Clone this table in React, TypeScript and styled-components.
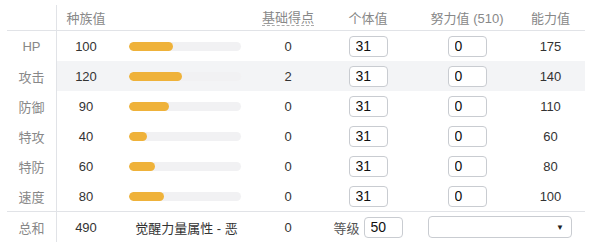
import styled, { createGlobalStyle } from "styled-components";

const GlobalStyle = createGlobalStyle`
  body {
    margin: 0;
    background: #fff;
    font-family: "Liberation Sans", "Noto Sans CJK SC", sans-serif;
    font-size: 13px;
    color: #333;
  }
`;

const COLS = "49px 1px 58px 143px 60px 100px 98px 69px";

const Table = styled.div`
  width: 578px;
  margin: 5px 0 0 7px;
  display: flex;
  flex-direction: column;
`;

const Row = styled.div<{ $h: number; $line?: boolean }>`
  display: grid;
  grid-template-columns: ${COLS};
  height: ${({ $h }) => $h}px;
  align-items: center;
  border-top: ${({ $line }) => ($line ? "1px solid #e1e3e7" : "none")};
`;

const Cell = styled.div<{ $shade?: boolean; $span?: number; $start?: boolean }>`
  height: 100%;
  display: flex;
  align-items: center;
  justify-content: ${({ $start }) => ($start ? "flex-start" : "center")};
  background: ${({ $shade }) => ($shade ? "#f3f4f6" : "transparent")};
  grid-column: ${({ $span }) => ($span ? `span ${$span}` : "auto")};
`;

const Label = styled(Cell)`
  color: #888;
`;

const VLine = styled.div`
  height: 100%;
  background: #e1e3e7;
`;

const Head = styled(Cell)`
  color: #888;
`;

const Dotted = styled.span`
  border-bottom: 1px dashed #aaa;
  line-height: 15px;
`;

const BarCell = styled(Cell)`
  justify-content: flex-start;
  padding-left: 14px;
`;

const Track = styled.div`
  width: 112px;
  height: 9px;
  border-radius: 5px;
  background: #f1f1f3;
  overflow: hidden;
`;

const Fill = styled.div`
  height: 100%;
  border-radius: 5px;
  background: #efb23a;
`;

const NumInput = styled.input`
  box-sizing: border-box;
  width: 39px;
  height: 21px;
  border: 1px solid #c9ccd1;
  border-radius: 4px;
  padding: 0 6px;
  font-family: "Liberation Sans", sans-serif;
  font-size: 14px;
  color: #111;
  background: #fff;
  outline: none;
`;

const LevelLabel = styled.span`
  color: #555;
  margin-right: 4px;
`;

const SelectBox = styled.div`
  box-sizing: border-box;
  width: 144px;
  height: 22px;
  margin-left: 10px;
  border: 1px solid #c9ccd1;
  border-radius: 4px;
  background: #fff;
  display: flex;
  align-items: center;
  justify-content: flex-end;
  padding-right: 7px;
  font-size: 8px;
  color: #222;
`;

const stats = [
  { name: "HP", base: 100, pt: 0, val: 175 },
  { name: "攻击", base: 120, pt: 2, val: 140 },
  { name: "防御", base: 90, pt: 0, val: 110 },
  { name: "特攻", base: 40, pt: 0, val: 60 },
  { name: "特防", base: 60, pt: 0, val: 80 },
  { name: "速度", base: 80, pt: 0, val: 100 },
];

export default function App() {
  return (
    <>
      <GlobalStyle />
      <Table>
        <Row $h={25}>
          <Head />
          <VLine />
          <Head>种族值</Head>
          <Head />
          <Head>
            <Dotted>基础得点</Dotted>
          </Head>
          <Head>个体值</Head>
          <Head>努力值 (510)</Head>
          <Head>能力值</Head>
        </Row>
        {stats.map((s, i) => {
          const shade = i === 1;
          return (
            <Row $h={30} $line={i === 0} key={s.name}>
              <Label>{s.name}</Label>
              <VLine />
              <Cell $shade={shade}>{s.base}</Cell>
              <BarCell $shade={shade}>
                <Track>
                  <Fill style={{ width: `${(s.base / 255) * 100}%` }} />
                </Track>
              </BarCell>
              <Cell $shade={shade}>{s.pt}</Cell>
              <Cell $shade={shade}>
                <NumInput defaultValue="31" />
              </Cell>
              <Cell $shade={shade}>
                <NumInput defaultValue="0" />
              </Cell>
              <Cell $shade={shade}>{s.val}</Cell>
            </Row>
          );
        })}
        <Row $h={30} $line>
          <Label>总和</Label>
          <VLine />
          <Cell>490</Cell>
          <Cell>觉醒力量属性 - 恶</Cell>
          <Cell>0</Cell>
          <Cell>
            <LevelLabel>等级</LevelLabel>
            <NumInput defaultValue="50" />
          </Cell>
          <Cell $span={2} $start>
            <SelectBox>▼</SelectBox>
          </Cell>
        </Row>
      </Table>
    </>
  );
}
